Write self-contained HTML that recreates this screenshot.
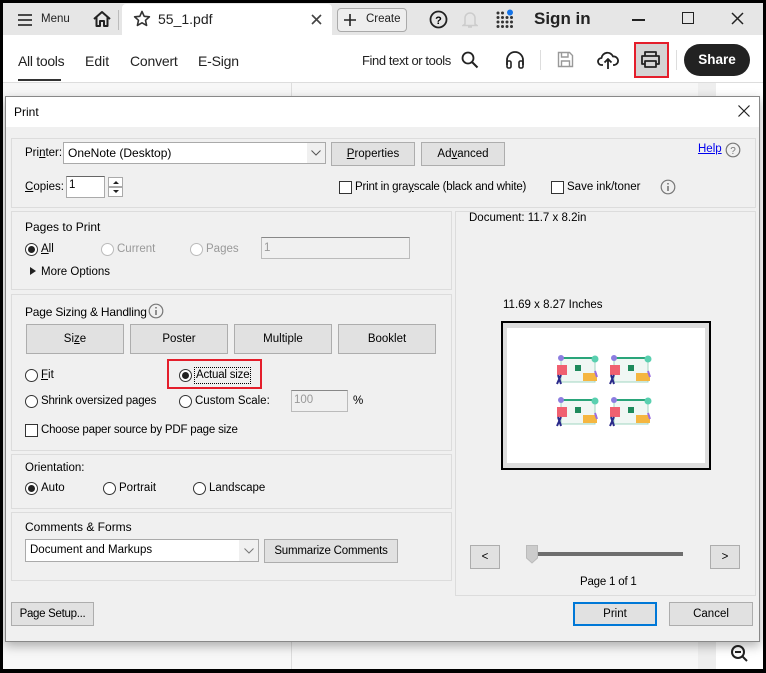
<!DOCTYPE html>
<html><head><meta charset="utf-8"><style>
*{margin:0;padding:0;box-sizing:border-box}
body{width:766px;height:673px;background:#000;position:relative;overflow:hidden;font-family:"Liberation Sans",sans-serif;font-size:11.5px;color:#000}
.a{position:absolute}
.t{position:absolute;white-space:nowrap}
.btn{position:absolute;background:#e1e1e1;border:1px solid #adadad;text-align:center;font-size:11.5px;white-space:nowrap}
.grp{position:absolute;border:1px solid #dcdcdc;background:#f0f0f0}
.rad{position:absolute;width:13px;height:13px;border:1px solid #333;border-radius:50%;background:#fff}
.rad.on::after{content:"";position:absolute;left:2px;top:2px;width:7px;height:7px;border-radius:50%;background:#222}
.rad.dis{border-color:#bbb}
.chk{position:absolute;width:13px;height:13px;border:1px solid #333;background:#fff}
u{text-decoration:underline}
</style></head><body>
<div class="a" style="left:3px;top:3px;width:760px;height:666px;background:#fff"></div>
<div class="a" style="left:3px;top:3px;width:760px;height:32px;background:#e6e6e6"></div>
<div class="a" style="left:122px;top:4px;width:210px;height:31px;background:#fff;border-radius:4px 4px 0 0"></div>
<svg class="a" style="left:17px;top:13px" width="16" height="14"><path d="M1 2H15M1 7H15M1 12H15" stroke="#333" stroke-width="1.8"/></svg>
<div class="t" style="left:41px;top:13px;font-size:11.5px;color:#222">Menu</div>
<svg class="a" style="left:92px;top:10px" width="20" height="18"><path d="M2 9L10 2L18 9M4.5 7V16H8V11H12V16H15.5V7" fill="none" stroke="#222" stroke-width="2" stroke-linejoin="round"/></svg>
<div class="a" style="left:118px;top:10px;width:1px;height:20px;background:#bbb"></div>
<svg class="a" style="left:133px;top:10px" width="18" height="17"><path d="M9 1.5L11.2 6.3L16.4 6.8L12.5 10.3L13.6 15.4L9 12.8L4.4 15.4L5.5 10.3L1.6 6.8L6.8 6.3Z" fill="none" stroke="#333" stroke-width="1.6" stroke-linejoin="round"/></svg>
<div class="t" style="left:158px;top:11px;font-size:14px;color:#222">55_1.pdf</div>
<svg class="a" style="left:311px;top:14px" width="11" height="11"><path d="M1 1L10 10M10 1L1 10" stroke="#444" stroke-width="1.6"/></svg>
<div class="a" style="left:337px;top:8px;width:70px;height:24px;border:1px solid #aaa;border-radius:4px;background:#eee"></div>
<svg class="a" style="left:344px;top:14px" width="12" height="12"><path d="M6 0V12M0 6H12" stroke="#222" stroke-width="1.6"/></svg>
<div class="t" style="left:366px;top:13px;font-size:11.5px;color:#222">Create</div>
<svg class="a" style="left:429px;top:10px" width="19" height="19"><circle cx="9.5" cy="9.5" r="8" fill="none" stroke="#222" stroke-width="1.8"/><text x="9.5" y="14" font-size="11" font-weight="bold" text-anchor="middle" font-family="Liberation Sans">?</text></svg>
<svg class="a" style="left:462px;top:10px" width="16" height="19"><path d="M3 14V8A5 5 0 0 1 13 8V14L15 15.5H1Z M6 17H10" fill="none" stroke="#ccc" stroke-width="1.5"/></svg>
<svg class="a" style="left:495px;top:9px" width="20" height="20"><g fill="#333"><circle cx="3" cy="4" r="1.5"/><circle cx="7.5" cy="4" r="1.5"/><circle cx="3" cy="8.5" r="1.5"/><circle cx="7.5" cy="8.5" r="1.5"/><circle cx="12" cy="8.5" r="1.5"/><circle cx="16.5" cy="8.5" r="1.5"/><circle cx="3" cy="13" r="1.5"/><circle cx="7.5" cy="13" r="1.5"/><circle cx="12" cy="13" r="1.5"/><circle cx="16.5" cy="13" r="1.5"/><circle cx="3" cy="17.5" r="1.5"/><circle cx="7.5" cy="17.5" r="1.5"/><circle cx="12" cy="17.5" r="1.5"/><circle cx="16.5" cy="17.5" r="1.5"/></g><circle cx="15" cy="3.5" r="3" fill="#1473e6"/></svg>
<div class="t" style="left:534px;top:9px;font-size:17px;font-weight:bold;color:#222">Sign in</div>
<div class="a" style="left:632px;top:19px;width:13px;height:1.5px;background:#222"></div>
<div class="a" style="left:682px;top:12px;width:12px;height:12px;border:1.5px solid #222"></div>
<svg class="a" style="left:731px;top:12px" width="13" height="13"><path d="M1 1L12 12M12 1L1 12" stroke="#222" stroke-width="1.5"/></svg>
<div class="t" style="left:18px;top:53px;font-size:14px;color:#222;letter-spacing:-0.3px">All tools</div>
<div class="a" style="left:18px;top:79px;width:43px;height:2px;background:#333"></div>
<div class="t" style="left:85px;top:53px;font-size:14px;color:#222">Edit</div>
<div class="t" style="left:130px;top:53px;font-size:14px;color:#222;letter-spacing:-0.2px">Convert</div>
<div class="t" style="left:198px;top:53px;font-size:14px;color:#222;letter-spacing:-0.2px">E-Sign</div>
<div class="t" style="left:362px;top:53px;font-size:13px;color:#222;letter-spacing:-0.4px">Find text or tools</div>
<svg class="a" style="left:461px;top:51px" width="18" height="18"><circle cx="7" cy="7" r="5.5" fill="none" stroke="#222" stroke-width="1.8"/><path d="M11 11L16.5 16.5" stroke="#222" stroke-width="2"/></svg>
<svg class="a" style="left:505px;top:51px" width="20" height="18"><path d="M2 14V9A8 8 0 0 1 18 9V14" fill="none" stroke="#222" stroke-width="1.8"/><rect x="2" y="10" width="4" height="7" rx="1.5" fill="none" stroke="#222" stroke-width="1.6"/><rect x="14" y="10" width="4" height="7" rx="1.5" fill="none" stroke="#222" stroke-width="1.6"/></svg>
<div class="a" style="left:540px;top:50px;width:1px;height:20px;background:#ddd"></div>
<svg class="a" style="left:557px;top:51px" width="17" height="17"><path d="M1.5 1.5H12.5L15.5 4.5V15.5H1.5Z M4.5 1.5V6H11V1.5 M4.5 15.5V10H12.5V15.5" fill="none" stroke="#999" stroke-width="1.4"/></svg>
<svg class="a" style="left:597px;top:50px" width="22" height="20"><path d="M6 15H4.5A3.5 3.5 0 0 1 4.5 8A6 6 0 0 1 16 6.5A4.3 4.3 0 0 1 17.5 15H16 M11 19V9M7.5 12.5L11 9L14.5 12.5" fill="none" stroke="#222" stroke-width="1.8" stroke-linejoin="round"/></svg>
<div class="a" style="left:634px;top:42px;width:35px;height:36px;border:2.5px solid #e41e2b;background:#d4d4d4"></div>
<svg class="a" style="left:640px;top:50px" width="21" height="19"><path d="M5 6V2H16V6 M5 14H2V6H19V14H16 M5 11H16V17H5Z" fill="none" stroke="#222" stroke-width="1.8" stroke-linejoin="round"/></svg>
<div class="a" style="left:676px;top:50px;width:1px;height:20px;background:#ddd"></div>
<div class="a" style="left:684px;top:44px;width:66px;height:32px;border-radius:16px;background:#222"></div>
<div class="t" style="left:684px;top:52px;width:66px;text-align:center;color:#fff;font-weight:bold;font-size:13.5px">Share</div>
<div class="a" style="left:3px;top:82px;width:760px;height:587px;background:#f7f7f7;border-top:1px solid #ddd"></div>
<div class="a" style="left:291px;top:83px;width:1px;height:586px;background:#ddd"></div>
<div class="a" style="left:698px;top:83px;width:18px;height:586px;background:#eee"></div>
<div class="a" style="left:716px;top:83px;width:47px;height:586px;background:#fff"></div>
<svg class="a" style="left:730px;top:644px" width="20" height="20"><circle cx="8" cy="8" r="6" fill="none" stroke="#222" stroke-width="2"/><path d="M5 8H11M12.5 12.5L17 17" stroke="#222" stroke-width="2"/></svg>
<div class="a" style="left:5px;top:96px;width:755px;height:546px;background:#f0f0f0;border:1px solid #888;box-shadow:0 4px 10px rgba(0,0,0,.3)"></div>
<div class="a" style="left:6px;top:97px;width:753px;height:30px;background:#fff"></div>
<div class="t" style="left:14px;top:105px;font-size:12px">Print</div>
<svg class="a" style="left:738px;top:105px" width="12" height="12"><path d="M0.5 0.5L11.5 11.5M11.5 0.5L0.5 11.5" stroke="#222" stroke-width="1.2"/></svg>

<div class="grp" style="left:11px;top:138px;width:745px;height:70px"></div>
<div class="t" style="left:25px;top:147px">Pri<u>n</u>ter:</div>
<div class="a" style="left:63px;top:142px;width:263px;height:22px;border:1px solid #aaa;background:#fff"></div>
<div class="a" style="left:307px;top:143px;width:18px;height:20px;background:#f0f0f0"></div>
<svg class="a" style="left:311px;top:150px" width="10" height="6"><path d="M0.5 0.5L5 5L9.5 0.5" fill="none" stroke="#555"/></svg>
<div class="t" style="left:68px;top:146px;font-size:12px">OneNote (Desktop)</div>
<div class="btn" style="left:331px;top:142px;width:84px;height:24px;line-height:22px"><u>P</u>roperties</div>
<div class="btn" style="left:421px;top:142px;width:84px;height:24px;line-height:22px">Ad<u>v</u>anced</div>
<div class="t" style="left:698px;top:143px;color:#00e;text-decoration:underline">Help</div>
<svg class="a" style="left:725px;top:142px" width="16" height="16"><circle cx="8" cy="8" r="6.8" fill="none" stroke="#777" stroke-width="1.2"/><text x="8" y="12" font-size="10" text-anchor="middle" fill="#777" font-family="Liberation Sans">?</text></svg>
<div class="t" style="left:25px;top:181px"><u>C</u>opies:</div>
<div class="a" style="left:66px;top:176px;width:39px;height:22px;border:1px solid #aaa;border-top-color:#666;background:#fff"></div>
<div class="t" style="left:69px;top:179px">1</div>
<div class="a" style="left:108px;top:177px;width:15px;height:10px;border:1px solid #aaa;background:#fff"></div>
<div class="a" style="left:108px;top:187px;width:15px;height:10px;border:1px solid #aaa;background:#fff"></div>
<svg class="a" style="left:112px;top:179px" width="8" height="16"><path d="M1 5L4 2L7 5ZM1 11L4 14L7 11Z" fill="#222"/></svg>
<div class="chk" style="left:339px;top:181px"></div>
<div class="t" style="left:355px;top:181px;letter-spacing:-0.2px">Print in gra<u>y</u>scale (black and white)</div>
<div class="chk" style="left:551px;top:181px"></div>
<div class="t" style="left:567px;top:181px">Save ink/toner</div>
<svg class="a" style="left:660px;top:179px" width="16" height="16"><circle cx="8" cy="8" r="6.8" fill="none" stroke="#777" stroke-width="1.2"/><path d="M8 7V12M8 4V5.5" stroke="#777" stroke-width="1.6"/></svg>

<div class="grp" style="left:11px;top:211px;width:441px;height:79px"></div>
<div class="t" style="left:25px;top:220px;font-size:12px">Pages to Print</div>
<div class="rad on" style="left:25px;top:243px"></div>
<div class="t" style="left:41px;top:243px"><u>A</u>ll</div>
<div class="rad dis" style="left:101px;top:243px"></div>
<div class="t" style="left:117px;top:243px;color:#999">Current</div>
<div class="rad dis" style="left:190px;top:243px"></div>
<div class="t" style="left:206px;top:243px;color:#999">Pages</div>
<div class="a" style="left:261px;top:237px;width:149px;height:22px;border:1px solid #bbb;border-top-color:#888;background:#f0f0f0"></div>
<div class="t" style="left:264px;top:242px;color:#999">1</div>
<svg class="a" style="left:30px;top:267px" width="6" height="8"><path d="M0 0L6 4L0 8Z" fill="#222"/></svg>
<div class="t" style="left:41px;top:266px">More Options</div>

<div class="grp" style="left:11px;top:294px;width:441px;height:157px"></div>
<div class="t" style="left:25px;top:305px;font-size:12px;letter-spacing:-0.2px">Page Sizing &amp; Handling</div>
<svg class="a" style="left:148px;top:303px" width="16" height="16"><circle cx="8" cy="8" r="6.8" fill="none" stroke="#777" stroke-width="1.2"/><path d="M8 7V12M8 4V5.5" stroke="#777" stroke-width="1.6"/></svg>
<div class="btn" style="left:26px;top:324px;width:98px;height:30px;line-height:28px">Si<u>z</u>e</div>
<div class="btn" style="left:130px;top:324px;width:98px;height:30px;line-height:28px">Poster</div>
<div class="btn" style="left:234px;top:324px;width:98px;height:30px;line-height:28px">Multiple</div>
<div class="btn" style="left:338px;top:324px;width:98px;height:30px;line-height:28px">Booklet</div>
<div class="rad" style="left:25px;top:369px"></div>
<div class="t" style="left:41px;top:369px"><u>F</u>it</div>
<div class="a" style="left:167px;top:359px;width:95px;height:30px;border:2.5px solid #e41e2b"></div>
<div class="rad on" style="left:179px;top:369px"></div>
<div class="t" style="left:194px;top:367px;padding:1px;border:1px dotted #000;line-height:13px;letter-spacing:-0.2px">Actual size</div>
<div class="rad" style="left:25px;top:395px"></div>
<div class="t" style="left:41px;top:395px;letter-spacing:-0.2px">Shrink oversized pages</div>
<div class="rad" style="left:179px;top:395px"></div>
<div class="t" style="left:195px;top:395px">Custom Scale:</div>
<div class="a" style="left:291px;top:390px;width:57px;height:22px;border:1px solid #bbb;border-top-color:#888;background:#f0f0f0"></div>
<div class="t" style="left:294px;top:394px;color:#999">100</div>
<div class="t" style="left:353px;top:395px">%</div>
<div class="chk" style="left:25px;top:424px"></div>
<div class="t" style="left:41px;top:424px;letter-spacing:-0.2px">Choose paper source by PDF page size</div>

<div class="grp" style="left:11px;top:454px;width:441px;height:55px"></div>
<div class="t" style="left:25px;top:462px">Orientation:</div>
<div class="rad on" style="left:25px;top:482px"></div>
<div class="t" style="left:41px;top:482px">Auto</div>
<div class="rad" style="left:103px;top:482px"></div>
<div class="t" style="left:119px;top:482px">Portrait</div>
<div class="rad" style="left:193px;top:482px"></div>
<div class="t" style="left:209px;top:482px">Landscape</div>

<div class="grp" style="left:11px;top:512px;width:441px;height:69px"></div>
<div class="t" style="left:25px;top:520px;font-size:12px">Comments &amp; Forms</div>
<div class="a" style="left:25px;top:539px;width:234px;height:23px;border:1px solid #aaa;background:#fff"></div>
<div class="a" style="left:239px;top:540px;width:19px;height:21px;background:#f0f0f0"></div>
<svg class="a" style="left:244px;top:548px" width="10" height="6"><path d="M0.5 0.5L5 5L9.5 0.5" fill="none" stroke="#777"/></svg>
<div class="t" style="left:30px;top:544px">Document and Markups</div>
<div class="btn" style="left:264px;top:539px;width:134px;height:24px;line-height:22px;letter-spacing:-0.2px">Summarize Comments</div>

<div class="grp" style="left:455px;top:211px;width:301px;height:385px"></div>
<div class="t" style="left:469px;top:212px">Document: 11.7 x 8.2in</div>
<div class="t" style="left:503px;top:299px">11.69 x 8.27 Inches</div>
<div class="a" style="left:501px;top:321px;width:210px;height:149px;border:2px solid #000;background:#ddd"></div>
<div class="a" style="left:507px;top:328px;width:198px;height:135px;background:#fff"></div>
<svg class="a" style="left:555px;top:355px" width="105" height="80">
<g id="ill"><rect x="6" y="3" width="34" height="24" fill="#f0f7f4" stroke="#9fd4c0"/><rect x="6" y="2" width="34" height="2" fill="#2aa57a"/><circle cx="6" cy="3" r="3" fill="#8c7de0"/><circle cx="40" cy="4" r="3.5" fill="#5ad0b0"/><rect x="20" y="10" width="6" height="6" fill="#1e8a5c"/><rect x="2" y="10" width="10" height="10" fill="#f06070"/><path d="M28 18H42V26H28Z" fill="#f5b640"/><path d="M3 20L6 29M6 20L2 29" stroke="#2a2a8a" stroke-width="2"/><path d="M40 16L42 22" stroke="#9b6ee0" stroke-width="2"/></g>
<use href="#ill" x="53"/><use href="#ill" y="42"/><use href="#ill" x="53" y="42"/>
</svg>
<div class="btn" style="left:470px;top:545px;width:30px;height:24px;line-height:22px">&lt;</div>
<div class="a" style="left:535px;top:552px;width:148px;height:4px;background:#6e6e6e"></div>
<svg class="a" style="left:526px;top:545px" width="12" height="19"><path d="M0.5 0.5H11.5V13L6 18L0.5 13Z" fill="#ccc" stroke="#bbb"/></svg>
<div class="btn" style="left:710px;top:545px;width:30px;height:24px;line-height:22px">&gt;</div>
<div class="t" style="left:580px;top:576px;letter-spacing:-0.2px">Page 1 of 1</div>
<div class="btn" style="left:11px;top:602px;width:83px;height:24px;line-height:22px;letter-spacing:-0.3px">Page Setup...</div>
<div class="btn" style="left:573px;top:602px;width:84px;height:24px;line-height:20px;border:2px solid #0078d7">Print</div>
<div class="btn" style="left:669px;top:602px;width:84px;height:24px;line-height:22px">Cancel</div>
</body></html>
